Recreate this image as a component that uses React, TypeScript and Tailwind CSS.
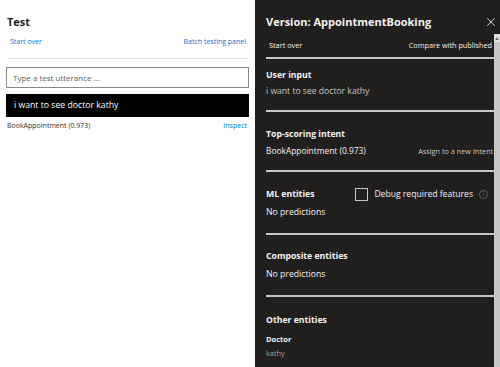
import { X } from "lucide-react";

// Sections of the inspect panel below the header
const sections = [
  { title: "Top-scoring intent", kind: "intent" },
  { title: "ML entities", kind: "ml" },
  { title: "Composite entities", kind: "composite" },
];

function Divider() {
  return <div className="h-[2px] bg-[#c8c6c4]" />;
}

const App: React.FC = () => {
  return (
    <div
      className="flex h-[367px] w-[500px] overflow-hidden bg-white"
      style={{ fontFamily: '"Open Sans", "Noto Sans", sans-serif' }}
    >
      {/* Test panel */}
      <section className="w-[255px] shrink-0 px-[6px]">
        <h1 className="mt-[13px] pl-[1px] text-[11px] font-bold leading-[18px] text-[#201f1e]">Test</h1>
        <div className="mt-[5px] flex items-center justify-between pl-[4px] pr-[3px] text-[7px] leading-[12px] text-[#0078d4]">
          <span>Start over</span>
          <span>Batch testing panel</span>
        </div>
        <div className="mx-[1px] mt-[10px] h-px bg-[#e1dfdd]" />
        <div className="mt-[8px] flex h-[21px] items-center border border-[#8a8886] px-[6px] text-[8px] text-[#605e5c]">
          Type a test utterance ...
        </div>
        <div className="mt-[6px] flex h-[23px] items-center bg-black px-[8px] text-[8.7px] text-white">
          i want to see doctor kathy
        </div>
        <div className="mt-[3px] flex items-center justify-between text-[7px] leading-[12px]">
          <span className="pl-[1px] text-[#323130]">BookAppointment (0.973)</span>
          <span className="pr-[2px] text-[#0078d4]">Inspect</span>
        </div>
      </section>

      {/* Inspect panel */}
      <section className="flex flex-1 flex-col bg-[#201f1e] text-[#f3f2f1]">
        <header className="flex h-[34px] items-start justify-between pl-[11px] pr-[2px] pt-[13px]">
          <h2 className="text-[11px] font-bold leading-[18px]">Version: AppointmentBooking</h2>
          <X className="mt-[2px] h-[14px] w-[14px]" strokeWidth={1.4} />
        </header>

        <div className="flex min-h-0 flex-1">
          <div className="flex-1 pl-[11px]">
            <div className="flex h-[23px] items-center justify-between pb-[1px] pl-[3px] pr-[2px] text-[7.3px]">
              <span>Start over</span>
              <span>Compare with published</span>
            </div>
            <Divider />

            <div className="h-[51px] pt-[9px]">
              <div className="text-[8.7px] font-bold leading-[14px]">User input</div>
              <div className="mt-[3px] text-[8.6px] leading-[12px] text-[#c8c6c4]">i want to see doctor kathy</div>
            </div>

            {sections.map((s) => (
              <div key={s.kind}>
                <Divider />
                <div
                  className={
                    s.kind === "intent"
                      ? "h-[58px] pt-[15px]"
                      : s.kind === "ml"
                      ? "h-[61px] pt-[15px]"
                      : "h-[60px] pt-[14px]"
                  }
                >
                  <div className="flex h-[14px] items-center">
                    <span className="text-[8.7px] font-bold leading-[14px]">{s.title}</span>
                    {s.kind === "ml" && (
                      <div className="ml-auto flex items-center">
                        <span className="h-[13px] w-[13px] border border-[#c8c6c4]" />
                        <span className="ml-[6px] text-[8.6px]">Debug required features</span>
                        <span className="ml-[6px] mr-[6px] flex h-[9px] w-[9px] items-center justify-center rounded-full border border-[#605e5c] text-[6px] leading-none text-[#605e5c]">
                          i
                        </span>
                      </div>
                    )}
                  </div>
                  {s.kind === "intent" ? (
                    <div className="mt-[3px] flex items-center justify-between pr-[1px] text-[8.4px] leading-[14px]">
                      <span>BookAppointment (0.973)</span>
                      <span className="text-[7.3px] text-[#c8c6c4]">Assign to a new intent</span>
                    </div>
                  ) : (
                    <div className="mt-[4px] text-[8.7px] leading-[14px]">No predictions</div>
                  )}
                </div>
              </div>
            ))}

            <Divider />
            <div className="pt-[16px]">
              <div className="text-[8.7px] font-bold leading-[14px]">Other entities</div>
              <div className="mt-[7px] text-[7.5px] font-bold leading-[11px]">Doctor</div>
              <div className="mt-[3px] text-[7.3px] leading-[11px] text-[#a19f9d]">kathy</div>
            </div>
          </div>

          {/* Scrollbar */}
          <div className="flex w-[6px] shrink-0 flex-col bg-[#c8c6c4]">
            <div className="flex h-[8px] items-center justify-center bg-[#e1dfdd] text-[5px] leading-none text-[#605e5c]">
              ▲
            </div>
          </div>
        </div>
      </section>
    </div>
  );
};

export default App;
